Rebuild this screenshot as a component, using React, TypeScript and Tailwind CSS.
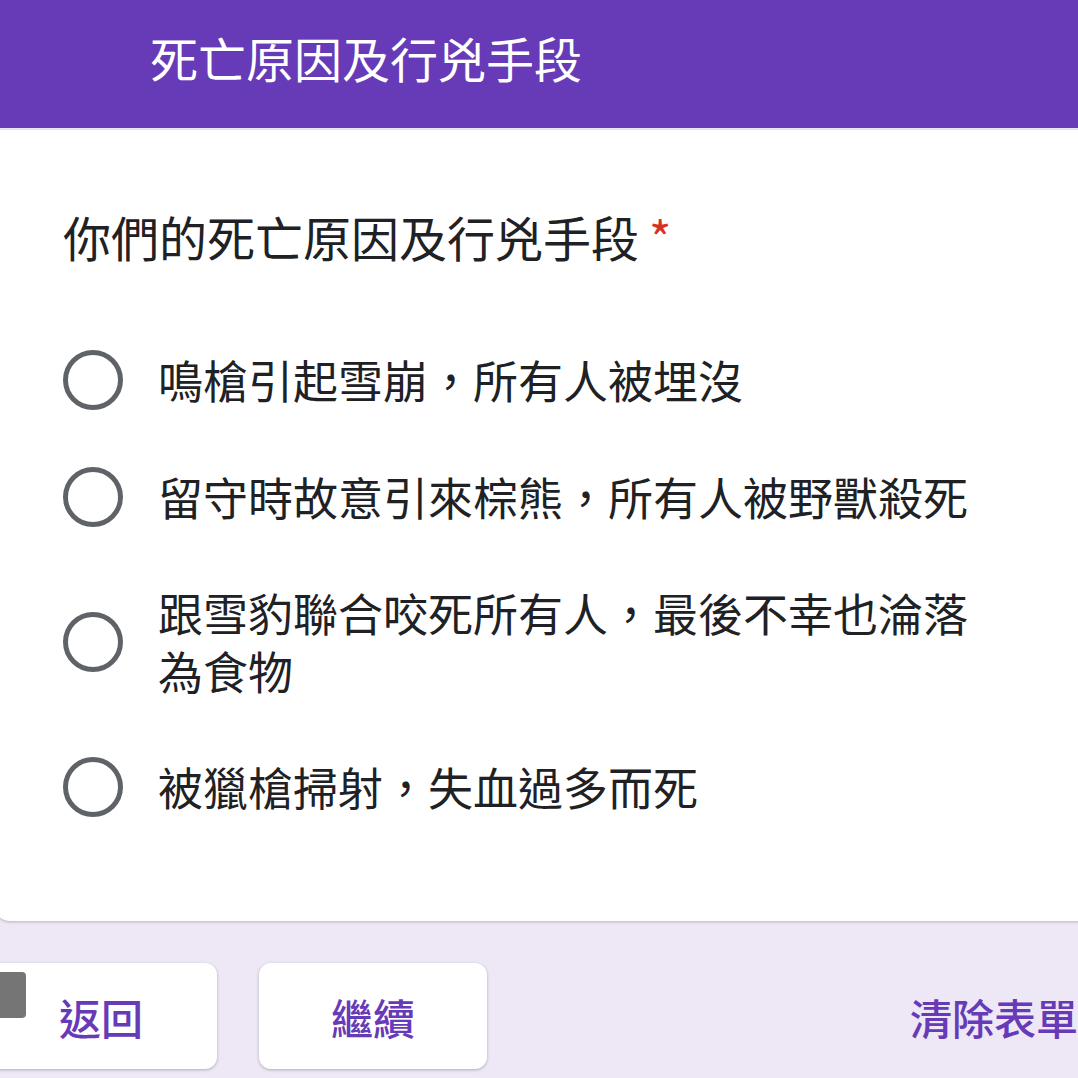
import React from 'react';

const FONT = '"Noto Sans CJK TC", "Noto Sans", sans-serif';

const OPTIONS = [
  '鳴槍引起雪崩，所有人被埋沒',
  '留守時故意引來棕熊，所有人被野獸殺死',
  '跟雪豹聯合咬死所有人，最後不幸也淪落為食物',
  '被獵槍掃射，失血過多而死',
];

const App: React.FC = () => {
  return (
    <div
      className="relative w-[1078px] h-[1078px] overflow-hidden bg-[#ede7f6]"
      style={{ fontFamily: FONT }}
    >
      <header className="h-[128px] bg-[#673ab7] pl-[150px] pt-[28px]">
        <h1 className="text-white text-[48px] leading-[58px] font-normal">死亡原因及行兇手段</h1>
      </header>

      <section className="mt-[2px] -ml-[6px] w-[1100px] bg-white rounded-bl-[16px] shadow-[0_1px_3px_rgba(60,64,67,0.3)] pt-[77px] pb-[104px] pl-[69px]">
        <h2 className="text-[#202124] text-[48px] leading-[58px] font-normal">
          你們的死亡原因及行兇手段
          <span className="text-[#d93025] ml-[10px]">*</span>
        </h2>

        <div className="mt-[85px] flex flex-col gap-[57px]">
          {OPTIONS.map((opt) => (
            <label key={opt} className="flex items-center">
              <span className="shrink-0 w-[60px] h-[60px] rounded-full border-[5px] border-[#5f6368]" />
              <span className="ml-[35px] w-[830px] text-[#202124] text-[45px] leading-[58px]">{opt}</span>
            </label>
          ))}
        </div>
      </section>

      <div className="mt-[42px] flex items-center">
        <button className="-ml-[15px] w-[232px] h-[106px] bg-white rounded-[12px] shadow-[0_1px_3px_rgba(60,64,67,0.35)] text-[#673ab7] text-[42px] font-medium">
          返回
        </button>
        <button className="ml-[42px] w-[228px] h-[106px] bg-white rounded-[12px] shadow-[0_1px_3px_rgba(60,64,67,0.35)] text-[#673ab7] text-[42px] font-medium">
          繼續
        </button>
        <button className="ml-auto text-[#673ab7] text-[42px] font-medium whitespace-nowrap">
          清除表單
        </button>
      </div>

      <div className="absolute left-0 top-[972px] w-[26px] h-[46px] rounded-r-[4px] bg-[#757575]" />
    </div>
  );
};

export default App;
